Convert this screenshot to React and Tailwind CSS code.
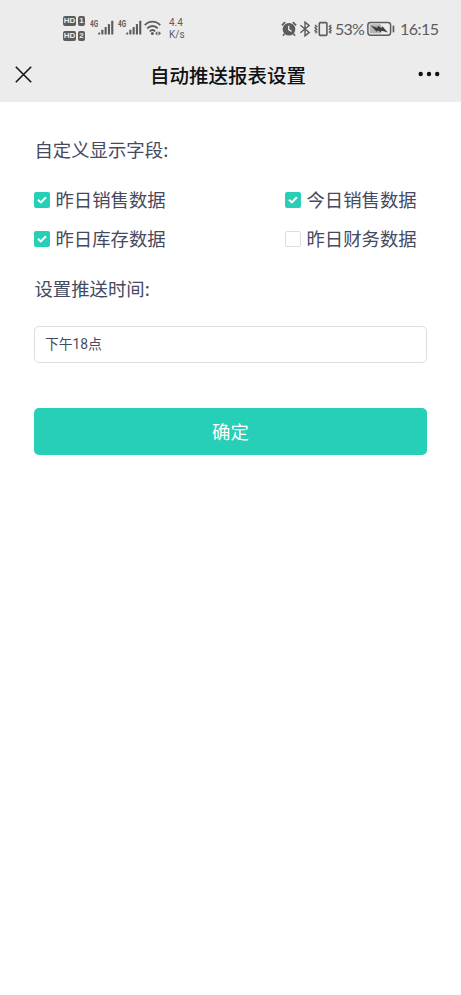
import { useState } from 'react';

const fieldOptions = [
  { id: 'yesterdaySales', label: '昨日销售数据', checked: true },
  { id: 'todaySales', label: '今日销售数据', checked: true },
  { id: 'yesterdayStock', label: '昨日库存数据', checked: true },
  { id: 'yesterdayFinance', label: '昨日财务数据', checked: false },
];

const HdBadge = ({ sim }) => (
  <div className="flex gap-[2px] font-['Liberation_Sans',sans-serif] text-[8px] leading-[10px] font-bold text-[#ececec]">
    <span className="w-[13px] h-[10px] rounded-[2px] bg-[#5c5c5c] text-center">HD</span>
    <span className="w-[7px] h-[10px] rounded-[2px] bg-[#5c5c5c] text-center">{sim}</span>
  </div>
);

const Signal = () => (
  <div className="flex w-[24px]">
    <span className="w-[8px] origin-left scale-x-[0.72] font-['Roboto',sans-serif] text-[9px] leading-[9px] font-bold">4G</span>
    <svg className="shrink-0" width="16" height="15" viewBox="0 0 16 15" fill="currentColor">
      <rect x="0.2" y="12.4" width="2" height="2.2" rx="0.5" />
      <rect x="3.3" y="9.8" width="2.1" height="4.8" rx="0.5" />
      <rect x="6.6" y="7" width="2.1" height="7.6" rx="0.5" />
      <rect x="9.9" y="4" width="2.1" height="10.6" rx="0.5" />
      <rect x="13.2" y="0.8" width="2.1" height="13.8" rx="0.5" />
    </svg>
  </div>
);

const WifiIcon = () => (
  <svg width="18" height="16" viewBox="0 0 18 16" fill="none" stroke="currentColor" strokeWidth="1.9">
    <path d="M0.8 5.2C5 0.4 12 0.4 16.2 5.2" />
    <path d="M3.3 8.4C6.2 5.2 10.8 5.2 13.7 8.4" />
    <path d="M5.8 11.3C7.5 9.6 9.5 9.6 11.2 11.3" />
    <circle cx="8.4" cy="13.5" r="1.5" fill="currentColor" stroke="none" />
    <path d="M13.4 11.2l-2.2 2.1 2.2 2.1zM14.5 11.2l2.6 2.1-2.6 2.1z" fill="currentColor" stroke="none" />
  </svg>
);

const AlarmIcon = () => (
  <svg className="shrink-0" width="16" height="16" viewBox="0 0 16 16" fill="none" stroke="currentColor">
    <circle cx="8" cy="8.3" r="6.3" fill="currentColor" stroke="none" />
    <path d="M0.9 4.3L4.1 1.2M15.1 4.3L11.9 1.2" strokeWidth="1.8" />
    <path d="M3.6 12.6L2 14.8M12.4 12.6l1.6 2.2" strokeWidth="1.6" />
    <path d="M7.7 4.8v3.8l2.8 1.8" stroke="#ececec" strokeWidth="1.3" />
  </svg>
);

const BluetoothIcon = () => (
  <svg className="shrink-0" width="12" height="16" viewBox="0 0 12 16" fill="none" stroke="currentColor" strokeWidth="1.4">
    <path d="M1.4 4.2L10.2 11.4L6 14.9V1.1L10.2 4.6L1.4 11.8" />
  </svg>
);

const VibrateIcon = () => (
  <svg className="shrink-0" width="18" height="16" viewBox="0 0 18 16" fill="none" stroke="currentColor" strokeWidth="1.6">
    <rect x="5.3" y="1.6" width="7.6" height="12.8" rx="1" />
    <path d="M1 4l1.8 1.4L1 6.8l1.8 1.4L1 9.6l1.8 1.4L1 12.2" strokeWidth="1.3" />
    <path d="M17.2 4l-1.8 1.4 1.8 1.4-1.8 1.4 1.8 1.4-1.8 1.4 1.8 1.2" strokeWidth="1.3" />
  </svg>
);

const BatteryIcon = () => (
  <svg className="shrink-0" width="28" height="16" viewBox="0 0 28 16" fill="none">
    <rect x="0.9" y="1.4" width="22.7" height="12.8" rx="2.6" stroke="currentColor" strokeWidth="1.5" />
    <rect x="2.8" y="3.3" width="11.4" height="9" rx="0.8" fill="#b4b4b4" />
    <path d="M3.8 4.4L10.2 6.8L11.2 4.8L14.2 6.9L15.4 5.2L20.8 11.6L14.8 9.7L13.6 11.3L11 9.4L9.6 10.8Z" fill="#3f3f3f" />
    <rect x="25.6" y="4.4" width="1.7" height="7" rx="0.7" fill="currentColor" />
  </svg>
);

const StatusBar = () => (
  <div className="h-[47px] pl-[63px] pr-[21px] flex items-start justify-between text-[#5c5c5c]">
    <div className="flex items-start">
      <div className="mt-[16px] flex flex-col gap-[5px]">
        <HdBadge sim="1" />
        <HdBadge sim="2" />
      </div>
      <div className="mt-[20px] ml-[5px] flex gap-[4px]">
        <Signal />
        <Signal />
      </div>
      <div className="mt-[20px] ml-[2px]">
        <WifiIcon />
      </div>
      <div className="mt-[17px] ml-[7px] font-['Roboto',sans-serif] text-[10px] leading-[12px]">
        <p className="h-[12px]">4.4</p>
        <p className="h-[12px]">K/s</p>
      </div>
    </div>
    <div className="mt-[20px] flex items-center h-[17px]">
      <AlarmIcon />
      <span className="ml-[2px]"><BluetoothIcon /></span>
      <span className="ml-[3px]"><VibrateIcon /></span>
      <span className="ml-[3px] w-[30px] mt-[1px] font-['Lato',sans-serif] text-[16px] tracking-[-0.8px] whitespace-nowrap">53%</span>
      <span className="ml-[2px]"><BatteryIcon /></span>
      <span className="ml-[5px] w-[40px] mt-[1px] font-['Lato',sans-serif] text-[16px] tracking-[-0.5px] whitespace-nowrap">16:15</span>
    </div>
  </div>
);

const NavBar = () => (
  <div className="h-[55px] pl-[15px] pr-[21px] flex items-center">
    <svg width="17" height="17" viewBox="0 0 17 17" stroke="#161616" strokeWidth="1.6">
      <path d="M0.8 0.8L16.2 16.2M16.2 0.8L0.8 16.2" />
    </svg>
    <h1 className="ml-[118px] text-[19.5px] leading-[28px] font-medium text-[#111]">自动推送报表设置</h1>
    <svg className="ml-auto mb-[2px]" width="22" height="6" viewBox="0 0 22 6" fill="#111">
      <circle cx="2.7" cy="3" r="2.2" />
      <circle cx="11" cy="3" r="2.2" />
      <circle cx="19.2" cy="3" r="2.2" />
    </svg>
  </div>
);

const CheckItem = ({ label, checked, onToggle }) => (
  <button className="flex items-center h-[39px] text-[18.4px] whitespace-nowrap" onClick={onToggle}>
    {checked ? (
      <span className="w-[16px] h-[16px] rounded-[2px] bg-[#26cfb5] flex items-center justify-center">
        <svg width="10" height="8" viewBox="0 0 10 8" fill="none" stroke="#fff" strokeWidth="2.1">
          <path d="M1 3.8L3.8 6.4L9 1.2" />
        </svg>
      </span>
    ) : (
      <span className="w-[16px] h-[16px] rounded-[2px] border border-[#dedede] bg-white" />
    )}
    <span className="ml-[5px]">{label}</span>
  </button>
);

const App = () => {
  const [fields, setFields] = useState(fieldOptions);

  const toggleField = (id) => {
    setFields((prev) => prev.map((f) => (f.id === id ? { ...f, checked: !f.checked } : f)));
  };

  return (
    <div className="min-h-screen bg-white font-['Noto_Sans_CJK_SC',sans-serif] text-[#464a5f]">
      <header className="bg-[#ececec]">
        <StatusBar />
        <NavBar />
      </header>

      <main className="px-[34.4px] pt-[33px]">
        <h2 className="text-[18.4px] leading-[28px]">自定义显示字段:</h2>
        <div className="mt-[17px] grid grid-cols-[251px_1fr]">
          {fields.map((field) => (
            <CheckItem
              key={field.id}
              label={field.label}
              checked={field.checked}
              onToggle={() => toggleField(field.id)}
            />
          ))}
        </div>

        <h2 className="mt-[16px] text-[18.4px] leading-[28px]">设置推送时间:</h2>
        <div className="mt-[24px] h-[37px] px-[9.5px] flex items-center rounded-[5px] border border-[#dedede] font-['Roboto','Noto_Sans_CJK_SC',sans-serif] text-[13.8px]">
          下午18点
        </div>

        <button className="mt-[45px] w-full h-[47px] rounded-[5px] bg-[#26cfb5] text-white text-[18.4px]">
          确定
        </button>
      </main>
    </div>
  );
};

export default App;
